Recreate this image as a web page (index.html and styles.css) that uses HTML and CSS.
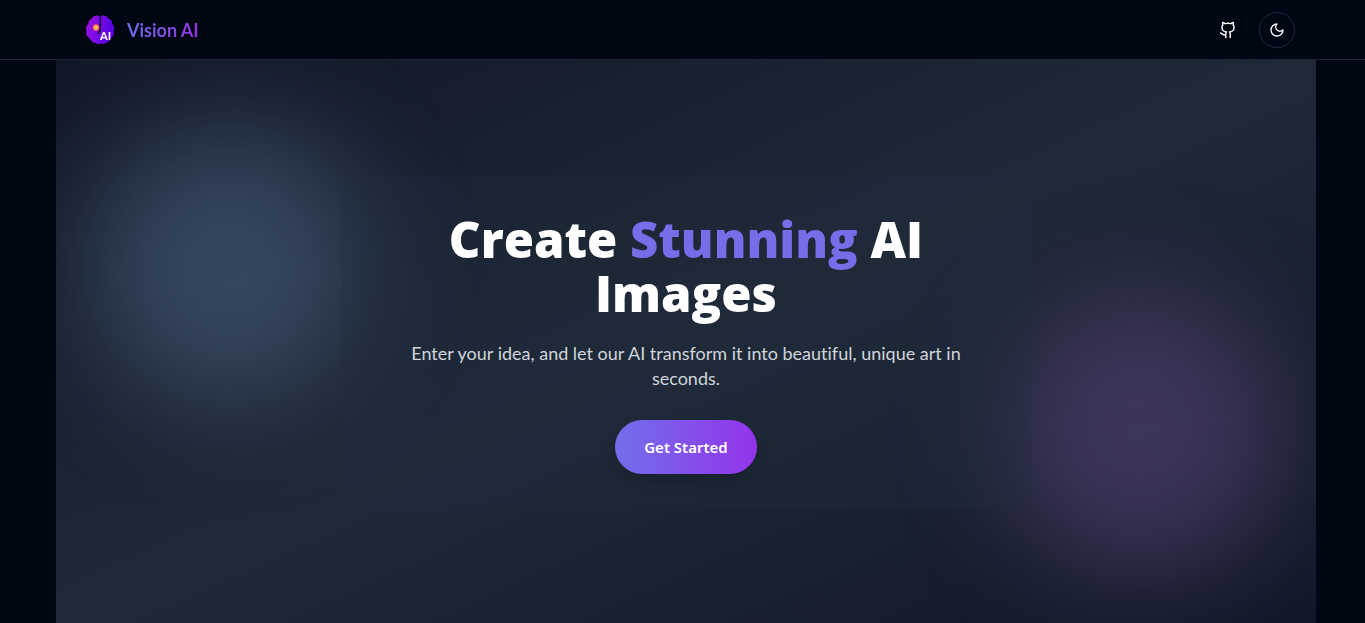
FILE: index.html
```html
<!DOCTYPE html>
<html lang="en">
<head>
<meta charset="utf-8">
<meta name="viewport" content="width=device-width, initial-scale=1">
<title>Vision AI</title>
<link rel="stylesheet" href="styles.css">
</head>
<body>
<header class="header">
  <a class="brand" href="#">
    <svg class="brand-logo" viewBox="0 0 30 30" aria-hidden="true">
      <defs>
        <linearGradient id="brain" x1="0" y1="0" x2="1" y2="0.3">
          <stop offset="0" stop-color="#a010dc"/>
          <stop offset="0.5" stop-color="#7a0ce8"/>
          <stop offset="1" stop-color="#5604e0"/>
        </linearGradient>
        <radialGradient id="spark">
          <stop offset="0" stop-color="#ffe060"/>
          <stop offset="0.6" stop-color="#ff9a50"/>
          <stop offset="1" stop-color="#e82088"/>
        </radialGradient>
      </defs>
      <path fill="url(#brain)" d="M14.500 1C12-0.500 7 1 6.500 4C4 4.500 3 7 3.500 9C1 11 0.500 14 1.500 16C0.500 19 2 22 4.500 23C6 27 9 28 11 28C13 30 15 29 15.500 28C17 30 20 29 21 27.500C24 27.500 25.500 25 26 23C29 21 29.500 18 28.500 16C30 13 29 10 27 9C27.500 6 26 4.500 24 4C23 1 18-0.500 16 1Z"/>
      <path fill="none" stroke="#12061f" stroke-width="1.500" d="M15.300 0.500V13Q15.300 17 12.500 18.500"/>
      <circle cx="11" cy="12.500" r="3.500" fill="url(#spark)"/>
      <text class="brand-mark" x="15" y="25">AI</text>
    </svg>
    <span class="brand-name">Vision AI</span>
  </a>
  <nav class="actions">
    <a class="github" href="#" aria-label="GitHub">
      <svg viewBox="0 0 24 24" aria-hidden="true"><path d="M15 22v-4a4.800 4.800 0 0 0-1-3.500c3 0 6-2 6-5.500.080-1.250-.270-2.480-1-3.500.280-1.150.280-2.350 0-3.500 0 0-1 0-3 1.500-2.640-.500-5.360-.500-8 0C6 2 5 2 5 2c-.300 1.150-.300 2.350 0 3.500A5.400 5.400 0 0 0 4 9c0 3.500 3 5.500 6 5.500-.390.490-.680 1.050-.850 1.650-.170.600-.220 1.230-.150 1.850v4M9 18c-4.510 2-5-2-7-2"/></svg>
    </a>
    <button class="theme" type="button" aria-label="Toggle theme">
      <svg viewBox="0 0 24 24" aria-hidden="true"><path d="M12 3a6 6 0 0 0 9 9 9 9 0 1 1-9-9Z"/></svg>
    </button>
  </nav>
</header>
<main class="page">
  <section class="hero">
    <div class="glow glow-blue"></div>
    <div class="glow glow-purple"></div>
    <div class="card">
      <h1 class="title">Create <span class="accent">Stunning</span> AI Images</h1>
      <p class="lead">Enter your idea, and let our AI transform it into beautiful, unique art in seconds.</p>
      <button class="cta" type="button">Get Started</button>
    </div>
  </section>
</main>
</body>
</html>
```
FILE: styles.css
```css
* { box-sizing: border-box; }

body {
  margin: 0;
  min-height: 100vh;
  display: flex;
  flex-direction: column;
  background: #000713;
  color: #fff;
  font-family: "Lato", "Noto Sans", sans-serif;
  font-variant-ligatures: none;
}

.header {
  display: flex;
  align-items: center;
  justify-content: space-between;
  height: 60px;
  padding: 0 70px 0 85px;
  border-bottom: 1px solid #1e293b;
}

.brand {
  display: flex;
  align-items: center;
  gap: 12px;
  text-decoration: none;
}

.brand-logo { width: 30px; height: 30px; }

.brand-mark {
  fill: #fff;
  font-size: 11px;
  font-weight: 700;
}

.brand-name {
  font-size: 18px;
  line-height: 26px;
  font-weight: 700;
  color: transparent;
  background: linear-gradient(to right, #6c6fe6, #9333dd);
  background-clip: text;
  -webkit-background-clip: text;
}

.actions {
  display: flex;
  align-items: center;
  gap: 22px;
}

.actions svg {
  display: block;
  fill: none;
  stroke: #f8fafc;
  stroke-width: 2;
  stroke-linecap: round;
  stroke-linejoin: round;
}

.github svg { width: 18px; height: 18px; }
.theme svg { width: 16px; height: 16px; }

.theme {
  display: grid;
  place-items: center;
  width: 36px;
  height: 36px;
  padding: 0;
  border: 1px solid #1e293b;
  border-radius: 50%;
  background: transparent;
}

.page {
  flex: 1;
  display: flex;
  padding: 0 49px 0 56px;
}

.hero {
  position: relative;
  flex: 1;
  display: flex;
  align-items: center;
  justify-content: center;
  padding: 26px 16px 24px;
  overflow: hidden;
  background: linear-gradient(to bottom right, #111827, #1f2937, #111827);
}

.glow {
  position: absolute;
  width: 280px;
  height: 280px;
  border-radius: 50%;
  filter: blur(54px);
}

.glow-blue {
  left: 30px;
  top: 62px;
  background: rgba(106, 136, 180, 0.36);
}

.glow-purple {
  right: 32px;
  bottom: 48px;
  background: rgba(130, 88, 168, 0.36);
}

.card {
  position: relative;
  width: 100%;
  max-width: 690px;
  padding: 36px;
  border-radius: 22px;
  background: rgba(34, 46, 63, 0.28);
  text-align: center;
}

.title {
  margin: 0 0 21px;
  font-family: "Open Sans", "Noto Sans", sans-serif;
  font-size: 49px;
  line-height: 54px;
  font-weight: 800;
}

.accent { color: #756ee8; }

.lead {
  margin: 0 0 29px;
  font-size: 18px;
  line-height: 25px;
  color: #d1d5db;
}

.cta {
  height: 54px;
  padding: 0 29px;
  border: 0;
  border-radius: 27px;
  background: linear-gradient(to right, #726fea, #9333ea);
  box-shadow: 0 8px 14px rgba(0, 0, 0, 0.16);
  color: #fff;
  font: 600 15px/24px "Noto Sans", sans-serif;
}
```
